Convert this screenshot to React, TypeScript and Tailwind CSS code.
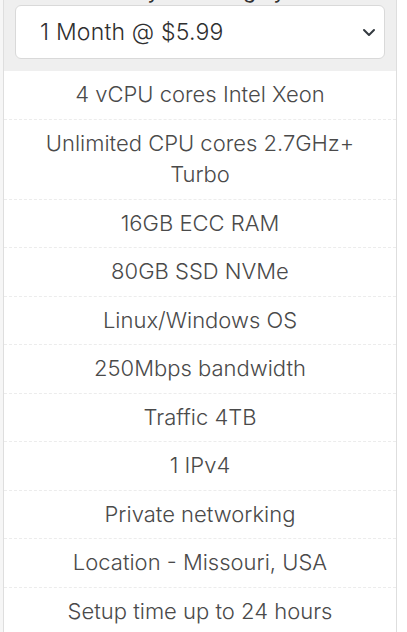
const FEATURES = [
  '4 vCPU cores Intel Xeon',
  'Unlimited CPU cores 2.7GHz+ Turbo',
  '16GB ECC RAM',
  '80GB SSD NVMe',
  'Linux/Windows OS',
  '250Mbps bandwidth',
  'Traffic 4TB',
  '1 IPv4',
  'Private networking',
  'Location - Missouri, USA',
  'Setup time up to 24 hours',
];

export default function App() {
  return (
    <div className="h-[632px] overflow-hidden bg-white font-['Inter',sans-serif] flex">
      <div className="w-[3px] bg-[#f6f6f6]" />
      <div className="w-[394px] border-x border-[#dedede] flex flex-col">
        {/* billing header */}
        <div className="shrink-0 bg-[#efefef] h-[71px] px-[11px] flex flex-col overflow-hidden">
          <div className="shrink-0 mt-[-24px] h-[29px] text-[21px] leading-[29px] text-center text-[#333]">
            Select your billing cycle:
          </div>
          <div className="shrink-0 h-[54px] bg-white border border-[#d9d9d9] rounded-[6px] flex items-center pl-6 pr-2">
            <span className="flex-1 text-[23px] font-light tracking-[0.2px] text-[#2f2f2f]">1 Month @ $5.99</span>
            <svg width="14" height="10" viewBox="0 0 14 10">
              <path d="M2 3 L7 8 L12 3" fill="none" stroke="#343a40" strokeWidth="2" strokeLinecap="round" strokeLinejoin="round" />
            </svg>
          </div>
        </div>

        {/* features */}
        <ul className="flex flex-col">
          {FEATURES.map((f, i) => (
            <li
              key={i}
              className="shrink-0 px-8 py-2 text-center text-[22px] font-light leading-[31.5px] text-[#4a4a4a] border-b border-dashed border-[#ececec]"
            >
              {f}
            </li>
          ))}
        </ul>
      </div>
    </div>
  );
}
